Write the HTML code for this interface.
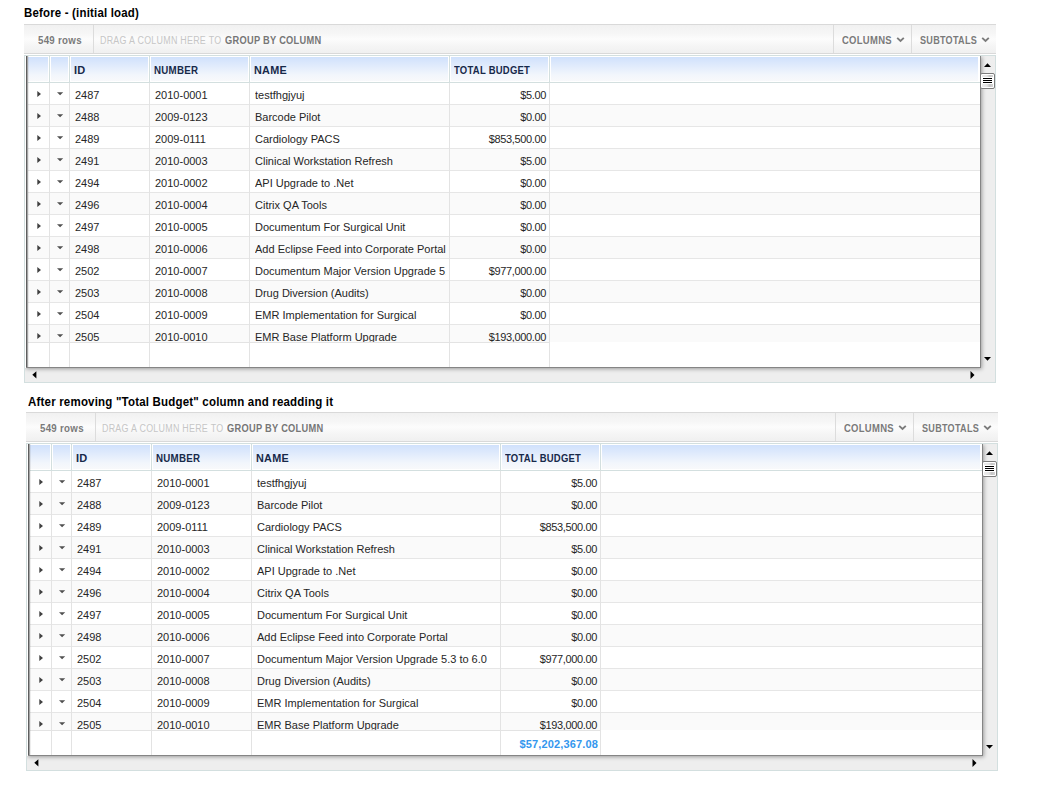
<!DOCTYPE html>
<html><head><meta charset="utf-8"><style>
*{margin:0;padding:0;box-sizing:border-box}
html,body{width:1041px;height:802px;background:#fff;overflow:hidden;position:relative;font-family:"Liberation Sans",sans-serif}
.a{position:absolute}
.title{position:absolute;font-size:12px;font-weight:bold;color:#000;white-space:nowrap;line-height:14px}
.tb{position:absolute;border-top:1px solid #d9d9d9;border-bottom:1px solid #d9d9d9;background:linear-gradient(#f1f1f1,#f6f6f6 30%,#fcfcfc 50%,#f5f5f5 75%,#f0f0f0)}
.tbs{position:absolute;top:0;bottom:0;width:1px;background:#dcdcdc}
.tbt{position:absolute;font-size:10px;white-space:nowrap;line-height:12px;color:#7a7a7a;font-weight:bold;transform-origin:0 0;letter-spacing:0.3px}
.grid{position:absolute;border:1px solid #d3dfdf;background:#eeeeee;overflow:hidden}
.hdr{position:absolute;background:linear-gradient(#d0e1fc,#e2ecfc 40%,#f2f6fc 75%,#f8f9fb);border:1px solid #fff}
.hl{position:absolute;width:1px;background:#d3dfdf}
.ht{position:absolute;font-size:11px;font-weight:bold;color:#17294a;white-space:nowrap;line-height:13px;transform-origin:0 0}
.row{position:absolute;height:22px;border-bottom:1px solid #e6e6e6}
.alt{background:#fafafa}
.cl{position:absolute;width:1px;background:#e3e3e3}
.ct{position:absolute;font-size:11px;color:#262626;white-space:nowrap;line-height:13px}
.r{text-align:right}
.vp{position:absolute;overflow:hidden}
.tri{position:absolute;width:0;height:0}
</style></head>
<body>
<div class="title" style="left:24px;top:6px;letter-spacing:0.2px;transform:scaleX(0.953);transform-origin:0 0">Before - (initial load)</div>
<div class="tb" style="left:24px;top:24px;width:972px;height:30px">
<div class="tbs" style="left:69px"></div>
<div class="tbt" style="left:13.7px;top:10px;transform:scaleX(0.97)">549 rows</div>
<div class="tbt" style="left:76px;top:10px;font-weight:normal;color:#c6c6c6;transform:scaleX(0.889)">DRAG A COLUMN HERE TO</div>
<div class="tbt" style="left:200.6px;top:10px;color:#767676;transform:scaleX(0.926)">GROUP BY COLUMN</div>
<div class="tbs" style="left:809px"></div>
<div class="tbt" style="left:817.5px;top:10px;transform:scaleX(0.947)">COLUMNS</div>
<svg class="a" style="left:872px;top:12px" width="9" height="6" viewBox="0 0 9 6"><path d="M1.2 0.9 L4.5 4 L7.8 0.9" fill="none" stroke="#7c7c7c" stroke-width="1.9"/></svg>
<div class="tbs" style="left:887px"></div>
<div class="tbt" style="left:895.5px;top:10px;transform:scaleX(0.907)">SUBTOTALS</div>
<svg class="a" style="left:957px;top:12px" width="9" height="6" viewBox="0 0 9 6"><path d="M1.2 0.9 L4.5 4 L7.8 0.9" fill="none" stroke="#7c7c7c" stroke-width="1.9"/></svg>
</div>
<div class="grid" style="left:24px;top:55px;width:972px;height:328px">
<div class="a" style="left:0;top:0;width:956px;height:312px;background:#fff;box-shadow:1px 1px 4px rgba(0,0,0,0.35)"></div>
<div class="hdr" style="left:3px;top:0px;width:951px;height:26px;border-left:0"></div>
<div class="hl" style="left:24px;top:0;height:26px"></div>
<div class="a" style="left:23px;top:0;height:26px;width:1px;background:#fff"></div>
<div class="a" style="left:25px;top:0;height:26px;width:1px;background:#fff"></div>
<div class="hl" style="left:44px;top:0;height:26px"></div>
<div class="a" style="left:43px;top:0;height:26px;width:1px;background:#fff"></div>
<div class="a" style="left:45px;top:0;height:26px;width:1px;background:#fff"></div>
<div class="hl" style="left:124px;top:0;height:26px"></div>
<div class="a" style="left:123px;top:0;height:26px;width:1px;background:#fff"></div>
<div class="a" style="left:125px;top:0;height:26px;width:1px;background:#fff"></div>
<div class="hl" style="left:224px;top:0;height:26px"></div>
<div class="a" style="left:223px;top:0;height:26px;width:1px;background:#fff"></div>
<div class="a" style="left:225px;top:0;height:26px;width:1px;background:#fff"></div>
<div class="hl" style="left:424px;top:0;height:26px"></div>
<div class="a" style="left:423px;top:0;height:26px;width:1px;background:#fff"></div>
<div class="a" style="left:425px;top:0;height:26px;width:1px;background:#fff"></div>
<div class="hl" style="left:524px;top:0;height:26px"></div>
<div class="a" style="left:523px;top:0;height:26px;width:1px;background:#fff"></div>
<div class="a" style="left:525px;top:0;height:26px;width:1px;background:#fff"></div>
<div class="a" style="left:3px;top:26px;width:952px;height:1px;background:#d3dfdf"></div>
<div class="ht" style="left:49px;top:8px;letter-spacing:0.3px;transform:scaleX(1.0)">ID</div>
<div class="ht" style="left:129px;top:8px;letter-spacing:0.3px;transform:scaleX(0.885)">NUMBER</div>
<div class="ht" style="left:229px;top:8px;letter-spacing:0.3px;transform:scaleX(0.984)">NAME</div>
<div class="ht" style="left:429px;top:8px;letter-spacing:0.3px;transform:scaleX(0.86)">TOTAL BUDGET</div>
<div class="vp" style="left:3px;top:27px;width:952px;height:259px">
<div class="row" style="left:0;top:0px;width:952px"></div>
<svg class="a" style="left:9px;top:7px" width="5" height="8" viewBox="0 0 5 8"><path d="M0.3 0.9 L4 3.9 L0.3 6.9Z" fill="#404040"/></svg>
<svg class="a" style="left:29px;top:9px" width="7" height="4" viewBox="0 0 7 4"><path d="M0 0.3 L6.2 0.3 L3.1 3.3Z" fill="#505050"/></svg>
<div class="ct" style="left:47px;top:6px">2487</div>
<div class="ct" style="left:127px;top:6px">2010-0001</div>
<div class="ct" style="left:227px;top:6px;width:191px;overflow:hidden">testfhgjyuj</div>
<div class="ct r" style="left:422px;top:6px;width:96px;letter-spacing:-0.35px">$5.00</div>
<div class="row alt" style="left:0;top:22px;width:952px"></div>
<svg class="a" style="left:9px;top:29px" width="5" height="8" viewBox="0 0 5 8"><path d="M0.3 0.9 L4 3.9 L0.3 6.9Z" fill="#404040"/></svg>
<svg class="a" style="left:29px;top:31px" width="7" height="4" viewBox="0 0 7 4"><path d="M0 0.3 L6.2 0.3 L3.1 3.3Z" fill="#505050"/></svg>
<div class="ct" style="left:47px;top:28px">2488</div>
<div class="ct" style="left:127px;top:28px">2009-0123</div>
<div class="ct" style="left:227px;top:28px;width:191px;overflow:hidden">Barcode Pilot</div>
<div class="ct r" style="left:422px;top:28px;width:96px;letter-spacing:-0.35px">$0.00</div>
<div class="row" style="left:0;top:44px;width:952px"></div>
<svg class="a" style="left:9px;top:51px" width="5" height="8" viewBox="0 0 5 8"><path d="M0.3 0.9 L4 3.9 L0.3 6.9Z" fill="#404040"/></svg>
<svg class="a" style="left:29px;top:53px" width="7" height="4" viewBox="0 0 7 4"><path d="M0 0.3 L6.2 0.3 L3.1 3.3Z" fill="#505050"/></svg>
<div class="ct" style="left:47px;top:50px">2489</div>
<div class="ct" style="left:127px;top:50px">2009-0111</div>
<div class="ct" style="left:227px;top:50px;width:191px;overflow:hidden">Cardiology PACS</div>
<div class="ct r" style="left:422px;top:50px;width:96px;letter-spacing:-0.35px">$853,500.00</div>
<div class="row alt" style="left:0;top:66px;width:952px"></div>
<svg class="a" style="left:9px;top:73px" width="5" height="8" viewBox="0 0 5 8"><path d="M0.3 0.9 L4 3.9 L0.3 6.9Z" fill="#404040"/></svg>
<svg class="a" style="left:29px;top:75px" width="7" height="4" viewBox="0 0 7 4"><path d="M0 0.3 L6.2 0.3 L3.1 3.3Z" fill="#505050"/></svg>
<div class="ct" style="left:47px;top:72px">2491</div>
<div class="ct" style="left:127px;top:72px">2010-0003</div>
<div class="ct" style="left:227px;top:72px;width:191px;overflow:hidden">Clinical Workstation Refresh</div>
<div class="ct r" style="left:422px;top:72px;width:96px;letter-spacing:-0.35px">$5.00</div>
<div class="row" style="left:0;top:88px;width:952px"></div>
<svg class="a" style="left:9px;top:95px" width="5" height="8" viewBox="0 0 5 8"><path d="M0.3 0.9 L4 3.9 L0.3 6.9Z" fill="#404040"/></svg>
<svg class="a" style="left:29px;top:97px" width="7" height="4" viewBox="0 0 7 4"><path d="M0 0.3 L6.2 0.3 L3.1 3.3Z" fill="#505050"/></svg>
<div class="ct" style="left:47px;top:94px">2494</div>
<div class="ct" style="left:127px;top:94px">2010-0002</div>
<div class="ct" style="left:227px;top:94px;width:191px;overflow:hidden">API Upgrade to .Net</div>
<div class="ct r" style="left:422px;top:94px;width:96px;letter-spacing:-0.35px">$0.00</div>
<div class="row alt" style="left:0;top:110px;width:952px"></div>
<svg class="a" style="left:9px;top:117px" width="5" height="8" viewBox="0 0 5 8"><path d="M0.3 0.9 L4 3.9 L0.3 6.9Z" fill="#404040"/></svg>
<svg class="a" style="left:29px;top:119px" width="7" height="4" viewBox="0 0 7 4"><path d="M0 0.3 L6.2 0.3 L3.1 3.3Z" fill="#505050"/></svg>
<div class="ct" style="left:47px;top:116px">2496</div>
<div class="ct" style="left:127px;top:116px">2010-0004</div>
<div class="ct" style="left:227px;top:116px;width:191px;overflow:hidden">Citrix QA Tools</div>
<div class="ct r" style="left:422px;top:116px;width:96px;letter-spacing:-0.35px">$0.00</div>
<div class="row" style="left:0;top:132px;width:952px"></div>
<svg class="a" style="left:9px;top:139px" width="5" height="8" viewBox="0 0 5 8"><path d="M0.3 0.9 L4 3.9 L0.3 6.9Z" fill="#404040"/></svg>
<svg class="a" style="left:29px;top:141px" width="7" height="4" viewBox="0 0 7 4"><path d="M0 0.3 L6.2 0.3 L3.1 3.3Z" fill="#505050"/></svg>
<div class="ct" style="left:47px;top:138px">2497</div>
<div class="ct" style="left:127px;top:138px">2010-0005</div>
<div class="ct" style="left:227px;top:138px;width:191px;overflow:hidden">Documentum For Surgical Unit</div>
<div class="ct r" style="left:422px;top:138px;width:96px;letter-spacing:-0.35px">$0.00</div>
<div class="row alt" style="left:0;top:154px;width:952px"></div>
<svg class="a" style="left:9px;top:161px" width="5" height="8" viewBox="0 0 5 8"><path d="M0.3 0.9 L4 3.9 L0.3 6.9Z" fill="#404040"/></svg>
<svg class="a" style="left:29px;top:163px" width="7" height="4" viewBox="0 0 7 4"><path d="M0 0.3 L6.2 0.3 L3.1 3.3Z" fill="#505050"/></svg>
<div class="ct" style="left:47px;top:160px">2498</div>
<div class="ct" style="left:127px;top:160px">2010-0006</div>
<div class="ct" style="left:227px;top:160px;width:191px;overflow:hidden">Add Eclipse Feed into Corporate Portal</div>
<div class="ct r" style="left:422px;top:160px;width:96px;letter-spacing:-0.35px">$0.00</div>
<div class="row" style="left:0;top:176px;width:952px"></div>
<svg class="a" style="left:9px;top:183px" width="5" height="8" viewBox="0 0 5 8"><path d="M0.3 0.9 L4 3.9 L0.3 6.9Z" fill="#404040"/></svg>
<svg class="a" style="left:29px;top:185px" width="7" height="4" viewBox="0 0 7 4"><path d="M0 0.3 L6.2 0.3 L3.1 3.3Z" fill="#505050"/></svg>
<div class="ct" style="left:47px;top:182px">2502</div>
<div class="ct" style="left:127px;top:182px">2010-0007</div>
<div class="ct" style="left:227px;top:182px;width:191px;overflow:hidden">Documentum Major Version Upgrade 5.3 to 6.0</div>
<div class="ct r" style="left:422px;top:182px;width:96px;letter-spacing:-0.35px">$977,000.00</div>
<div class="row alt" style="left:0;top:198px;width:952px"></div>
<svg class="a" style="left:9px;top:205px" width="5" height="8" viewBox="0 0 5 8"><path d="M0.3 0.9 L4 3.9 L0.3 6.9Z" fill="#404040"/></svg>
<svg class="a" style="left:29px;top:207px" width="7" height="4" viewBox="0 0 7 4"><path d="M0 0.3 L6.2 0.3 L3.1 3.3Z" fill="#505050"/></svg>
<div class="ct" style="left:47px;top:204px">2503</div>
<div class="ct" style="left:127px;top:204px">2010-0008</div>
<div class="ct" style="left:227px;top:204px;width:191px;overflow:hidden">Drug Diversion (Audits)</div>
<div class="ct r" style="left:422px;top:204px;width:96px;letter-spacing:-0.35px">$0.00</div>
<div class="row" style="left:0;top:220px;width:952px"></div>
<svg class="a" style="left:9px;top:227px" width="5" height="8" viewBox="0 0 5 8"><path d="M0.3 0.9 L4 3.9 L0.3 6.9Z" fill="#404040"/></svg>
<svg class="a" style="left:29px;top:229px" width="7" height="4" viewBox="0 0 7 4"><path d="M0 0.3 L6.2 0.3 L3.1 3.3Z" fill="#505050"/></svg>
<div class="ct" style="left:47px;top:226px">2504</div>
<div class="ct" style="left:127px;top:226px">2010-0009</div>
<div class="ct" style="left:227px;top:226px;width:191px;overflow:hidden">EMR Implementation for Surgical</div>
<div class="ct r" style="left:422px;top:226px;width:96px;letter-spacing:-0.35px">$0.00</div>
<div class="row alt" style="left:0;top:242px;width:952px"></div>
<svg class="a" style="left:9px;top:249px" width="5" height="8" viewBox="0 0 5 8"><path d="M0.3 0.9 L4 3.9 L0.3 6.9Z" fill="#404040"/></svg>
<svg class="a" style="left:29px;top:251px" width="7" height="4" viewBox="0 0 7 4"><path d="M0 0.3 L6.2 0.3 L3.1 3.3Z" fill="#505050"/></svg>
<div class="ct" style="left:47px;top:248px">2505</div>
<div class="ct" style="left:127px;top:248px">2010-0010</div>
<div class="ct" style="left:227px;top:248px;width:191px;overflow:hidden">EMR Base Platform Upgrade</div>
<div class="ct r" style="left:422px;top:248px;width:96px;letter-spacing:-0.35px">$193,000.00</div>
<div class="cl" style="left:21px;top:0;height:259px"></div>
<div class="cl" style="left:41px;top:0;height:259px"></div>
<div class="cl" style="left:121px;top:0;height:259px"></div>
<div class="cl" style="left:221px;top:0;height:259px"></div>
<div class="cl" style="left:421px;top:0;height:259px"></div>
<div class="cl" style="left:521px;top:0;height:259px"></div>
</div>
<div class="a" style="left:3px;top:286px;width:521px;height:1px;background:#e3e3e3"></div>
<div class="cl" style="left:24px;top:286px;height:25px"></div>
<div class="cl" style="left:44px;top:286px;height:25px"></div>
<div class="cl" style="left:124px;top:286px;height:25px"></div>
<div class="cl" style="left:224px;top:286px;height:25px"></div>
<div class="cl" style="left:424px;top:286px;height:25px"></div>
<div class="cl" style="left:524px;top:286px;height:25px"></div>
<div class="a" style="left:1px;top:0;width:1px;height:311px;background:#5e5e5e"></div>
<div class="a" style="left:2px;top:0;width:1px;height:311px;background:#a5a5a5"></div>
<div class="a" style="left:3px;top:0;width:1px;height:311px;background:rgba(0,0,0,0.07)"></div>
<div class="a" style="left:955px;top:0;width:1px;height:312px;background:#858585"></div>
<div class="a" style="left:1px;top:311px;width:955px;height:1px;background:#858585"></div>
<svg class="a" style="left:959px;top:7px" width="7" height="4" viewBox="0 0 7 4"><path d="M0 4 L3.5 0.2 L7 4Z" fill="#000"/></svg>
<div class="a" style="left:955px;top:17px;width:15px;height:16px;border:1px solid #7c7c7c;border-radius:2px;background:#fff"></div>
<div class="a" style="left:957px;top:19px;width:11px;height:12px;background:linear-gradient(90deg,#ececec,#e4e4e4 45%,#c4c4c4 70%,#d4d4d4)"></div>
<div class="a" style="left:957px;top:21px;width:11px;height:7px;background:#fff"></div>
<div class="a" style="left:958px;top:22px;width:9px;height:1px;background:#000"></div>
<div class="a" style="left:958px;top:24px;width:9px;height:1px;background:#000"></div>
<div class="a" style="left:958px;top:26px;width:9px;height:1px;background:#000"></div>
<svg class="a" style="left:959px;top:301px" width="7" height="4" viewBox="0 0 7 4"><path d="M0 0 L3.5 3.8 L7 0Z" fill="#000"/></svg>
<svg class="a" style="left:7px;top:315px" width="5" height="8" viewBox="0 0 5 8"><path d="M4.4 0.2 L0.3 3.8 L4.4 7.4Z" fill="#000"/></svg>
<svg class="a" style="left:945px;top:315px" width="5" height="8" viewBox="0 0 5 8"><path d="M0.5 0 L4.5 4 L0.5 8Z" fill="#000"/></svg>
</div>
<div class="title" style="left:28px;top:395px;letter-spacing:0.2px;transform:scaleX(0.959);transform-origin:0 0">After removing "Total Budget" column and readding it</div>
<div class="tb" style="left:26px;top:412px;width:972px;height:30px">
<div class="tbs" style="left:69px"></div>
<div class="tbt" style="left:13.7px;top:10px;transform:scaleX(0.97)">549 rows</div>
<div class="tbt" style="left:76px;top:10px;font-weight:normal;color:#c6c6c6;transform:scaleX(0.889)">DRAG A COLUMN HERE TO</div>
<div class="tbt" style="left:200.6px;top:10px;color:#767676;transform:scaleX(0.926)">GROUP BY COLUMN</div>
<div class="tbs" style="left:809px"></div>
<div class="tbt" style="left:817.5px;top:10px;transform:scaleX(0.947)">COLUMNS</div>
<svg class="a" style="left:872px;top:12px" width="9" height="6" viewBox="0 0 9 6"><path d="M1.2 0.9 L4.5 4 L7.8 0.9" fill="none" stroke="#7c7c7c" stroke-width="1.9"/></svg>
<div class="tbs" style="left:887px"></div>
<div class="tbt" style="left:895.5px;top:10px;transform:scaleX(0.907)">SUBTOTALS</div>
<svg class="a" style="left:957px;top:12px" width="9" height="6" viewBox="0 0 9 6"><path d="M1.2 0.9 L4.5 4 L7.8 0.9" fill="none" stroke="#7c7c7c" stroke-width="1.9"/></svg>
</div>
<div class="grid" style="left:26px;top:443px;width:972px;height:328px">
<div class="a" style="left:0;top:0;width:956px;height:312px;background:#fff;box-shadow:1px 1px 4px rgba(0,0,0,0.35)"></div>
<div class="hdr" style="left:1px;top:0px;width:953px;height:26px;border-left:0"></div>
<div class="hl" style="left:24px;top:0;height:26px"></div>
<div class="a" style="left:23px;top:0;height:26px;width:1px;background:#fff"></div>
<div class="a" style="left:25px;top:0;height:26px;width:1px;background:#fff"></div>
<div class="hl" style="left:44px;top:0;height:26px"></div>
<div class="a" style="left:43px;top:0;height:26px;width:1px;background:#fff"></div>
<div class="a" style="left:45px;top:0;height:26px;width:1px;background:#fff"></div>
<div class="hl" style="left:124px;top:0;height:26px"></div>
<div class="a" style="left:123px;top:0;height:26px;width:1px;background:#fff"></div>
<div class="a" style="left:125px;top:0;height:26px;width:1px;background:#fff"></div>
<div class="hl" style="left:224px;top:0;height:26px"></div>
<div class="a" style="left:223px;top:0;height:26px;width:1px;background:#fff"></div>
<div class="a" style="left:225px;top:0;height:26px;width:1px;background:#fff"></div>
<div class="hl" style="left:473px;top:0;height:26px"></div>
<div class="a" style="left:472px;top:0;height:26px;width:1px;background:#fff"></div>
<div class="a" style="left:474px;top:0;height:26px;width:1px;background:#fff"></div>
<div class="hl" style="left:573px;top:0;height:26px"></div>
<div class="a" style="left:572px;top:0;height:26px;width:1px;background:#fff"></div>
<div class="a" style="left:574px;top:0;height:26px;width:1px;background:#fff"></div>
<div class="a" style="left:1px;top:26px;width:954px;height:1px;background:#d3dfdf"></div>
<div class="ht" style="left:49px;top:8px;letter-spacing:0.3px;transform:scaleX(1.0)">ID</div>
<div class="ht" style="left:129px;top:8px;letter-spacing:0.3px;transform:scaleX(0.885)">NUMBER</div>
<div class="ht" style="left:229px;top:8px;letter-spacing:0.3px;transform:scaleX(0.984)">NAME</div>
<div class="ht" style="left:478px;top:8px;letter-spacing:0.3px;transform:scaleX(0.86)">TOTAL BUDGET</div>
<div class="vp" style="left:1px;top:27px;width:954px;height:259px">
<div class="row" style="left:0;top:0px;width:954px"></div>
<svg class="a" style="left:11px;top:7px" width="5" height="8" viewBox="0 0 5 8"><path d="M0.3 0.9 L4 3.9 L0.3 6.9Z" fill="#404040"/></svg>
<svg class="a" style="left:31px;top:9px" width="7" height="4" viewBox="0 0 7 4"><path d="M0 0.3 L6.2 0.3 L3.1 3.3Z" fill="#505050"/></svg>
<div class="ct" style="left:49px;top:6px">2487</div>
<div class="ct" style="left:129px;top:6px">2010-0001</div>
<div class="ct" style="left:229px;top:6px;width:240px;overflow:hidden">testfhgjyuj</div>
<div class="ct r" style="left:473px;top:6px;width:96px;letter-spacing:-0.35px">$5.00</div>
<div class="row alt" style="left:0;top:22px;width:954px"></div>
<svg class="a" style="left:11px;top:29px" width="5" height="8" viewBox="0 0 5 8"><path d="M0.3 0.9 L4 3.9 L0.3 6.9Z" fill="#404040"/></svg>
<svg class="a" style="left:31px;top:31px" width="7" height="4" viewBox="0 0 7 4"><path d="M0 0.3 L6.2 0.3 L3.1 3.3Z" fill="#505050"/></svg>
<div class="ct" style="left:49px;top:28px">2488</div>
<div class="ct" style="left:129px;top:28px">2009-0123</div>
<div class="ct" style="left:229px;top:28px;width:240px;overflow:hidden">Barcode Pilot</div>
<div class="ct r" style="left:473px;top:28px;width:96px;letter-spacing:-0.35px">$0.00</div>
<div class="row" style="left:0;top:44px;width:954px"></div>
<svg class="a" style="left:11px;top:51px" width="5" height="8" viewBox="0 0 5 8"><path d="M0.3 0.9 L4 3.9 L0.3 6.9Z" fill="#404040"/></svg>
<svg class="a" style="left:31px;top:53px" width="7" height="4" viewBox="0 0 7 4"><path d="M0 0.3 L6.2 0.3 L3.1 3.3Z" fill="#505050"/></svg>
<div class="ct" style="left:49px;top:50px">2489</div>
<div class="ct" style="left:129px;top:50px">2009-0111</div>
<div class="ct" style="left:229px;top:50px;width:240px;overflow:hidden">Cardiology PACS</div>
<div class="ct r" style="left:473px;top:50px;width:96px;letter-spacing:-0.35px">$853,500.00</div>
<div class="row alt" style="left:0;top:66px;width:954px"></div>
<svg class="a" style="left:11px;top:73px" width="5" height="8" viewBox="0 0 5 8"><path d="M0.3 0.9 L4 3.9 L0.3 6.9Z" fill="#404040"/></svg>
<svg class="a" style="left:31px;top:75px" width="7" height="4" viewBox="0 0 7 4"><path d="M0 0.3 L6.2 0.3 L3.1 3.3Z" fill="#505050"/></svg>
<div class="ct" style="left:49px;top:72px">2491</div>
<div class="ct" style="left:129px;top:72px">2010-0003</div>
<div class="ct" style="left:229px;top:72px;width:240px;overflow:hidden">Clinical Workstation Refresh</div>
<div class="ct r" style="left:473px;top:72px;width:96px;letter-spacing:-0.35px">$5.00</div>
<div class="row" style="left:0;top:88px;width:954px"></div>
<svg class="a" style="left:11px;top:95px" width="5" height="8" viewBox="0 0 5 8"><path d="M0.3 0.9 L4 3.9 L0.3 6.9Z" fill="#404040"/></svg>
<svg class="a" style="left:31px;top:97px" width="7" height="4" viewBox="0 0 7 4"><path d="M0 0.3 L6.2 0.3 L3.1 3.3Z" fill="#505050"/></svg>
<div class="ct" style="left:49px;top:94px">2494</div>
<div class="ct" style="left:129px;top:94px">2010-0002</div>
<div class="ct" style="left:229px;top:94px;width:240px;overflow:hidden">API Upgrade to .Net</div>
<div class="ct r" style="left:473px;top:94px;width:96px;letter-spacing:-0.35px">$0.00</div>
<div class="row alt" style="left:0;top:110px;width:954px"></div>
<svg class="a" style="left:11px;top:117px" width="5" height="8" viewBox="0 0 5 8"><path d="M0.3 0.9 L4 3.9 L0.3 6.9Z" fill="#404040"/></svg>
<svg class="a" style="left:31px;top:119px" width="7" height="4" viewBox="0 0 7 4"><path d="M0 0.3 L6.2 0.3 L3.1 3.3Z" fill="#505050"/></svg>
<div class="ct" style="left:49px;top:116px">2496</div>
<div class="ct" style="left:129px;top:116px">2010-0004</div>
<div class="ct" style="left:229px;top:116px;width:240px;overflow:hidden">Citrix QA Tools</div>
<div class="ct r" style="left:473px;top:116px;width:96px;letter-spacing:-0.35px">$0.00</div>
<div class="row" style="left:0;top:132px;width:954px"></div>
<svg class="a" style="left:11px;top:139px" width="5" height="8" viewBox="0 0 5 8"><path d="M0.3 0.9 L4 3.9 L0.3 6.9Z" fill="#404040"/></svg>
<svg class="a" style="left:31px;top:141px" width="7" height="4" viewBox="0 0 7 4"><path d="M0 0.3 L6.2 0.3 L3.1 3.3Z" fill="#505050"/></svg>
<div class="ct" style="left:49px;top:138px">2497</div>
<div class="ct" style="left:129px;top:138px">2010-0005</div>
<div class="ct" style="left:229px;top:138px;width:240px;overflow:hidden">Documentum For Surgical Unit</div>
<div class="ct r" style="left:473px;top:138px;width:96px;letter-spacing:-0.35px">$0.00</div>
<div class="row alt" style="left:0;top:154px;width:954px"></div>
<svg class="a" style="left:11px;top:161px" width="5" height="8" viewBox="0 0 5 8"><path d="M0.3 0.9 L4 3.9 L0.3 6.9Z" fill="#404040"/></svg>
<svg class="a" style="left:31px;top:163px" width="7" height="4" viewBox="0 0 7 4"><path d="M0 0.3 L6.2 0.3 L3.1 3.3Z" fill="#505050"/></svg>
<div class="ct" style="left:49px;top:160px">2498</div>
<div class="ct" style="left:129px;top:160px">2010-0006</div>
<div class="ct" style="left:229px;top:160px;width:240px;overflow:hidden">Add Eclipse Feed into Corporate Portal</div>
<div class="ct r" style="left:473px;top:160px;width:96px;letter-spacing:-0.35px">$0.00</div>
<div class="row" style="left:0;top:176px;width:954px"></div>
<svg class="a" style="left:11px;top:183px" width="5" height="8" viewBox="0 0 5 8"><path d="M0.3 0.9 L4 3.9 L0.3 6.9Z" fill="#404040"/></svg>
<svg class="a" style="left:31px;top:185px" width="7" height="4" viewBox="0 0 7 4"><path d="M0 0.3 L6.2 0.3 L3.1 3.3Z" fill="#505050"/></svg>
<div class="ct" style="left:49px;top:182px">2502</div>
<div class="ct" style="left:129px;top:182px">2010-0007</div>
<div class="ct" style="left:229px;top:182px;width:240px;overflow:hidden">Documentum Major Version Upgrade 5.3 to 6.0</div>
<div class="ct r" style="left:473px;top:182px;width:96px;letter-spacing:-0.35px">$977,000.00</div>
<div class="row alt" style="left:0;top:198px;width:954px"></div>
<svg class="a" style="left:11px;top:205px" width="5" height="8" viewBox="0 0 5 8"><path d="M0.3 0.9 L4 3.9 L0.3 6.9Z" fill="#404040"/></svg>
<svg class="a" style="left:31px;top:207px" width="7" height="4" viewBox="0 0 7 4"><path d="M0 0.3 L6.2 0.3 L3.1 3.3Z" fill="#505050"/></svg>
<div class="ct" style="left:49px;top:204px">2503</div>
<div class="ct" style="left:129px;top:204px">2010-0008</div>
<div class="ct" style="left:229px;top:204px;width:240px;overflow:hidden">Drug Diversion (Audits)</div>
<div class="ct r" style="left:473px;top:204px;width:96px;letter-spacing:-0.35px">$0.00</div>
<div class="row" style="left:0;top:220px;width:954px"></div>
<svg class="a" style="left:11px;top:227px" width="5" height="8" viewBox="0 0 5 8"><path d="M0.3 0.9 L4 3.9 L0.3 6.9Z" fill="#404040"/></svg>
<svg class="a" style="left:31px;top:229px" width="7" height="4" viewBox="0 0 7 4"><path d="M0 0.3 L6.2 0.3 L3.1 3.3Z" fill="#505050"/></svg>
<div class="ct" style="left:49px;top:226px">2504</div>
<div class="ct" style="left:129px;top:226px">2010-0009</div>
<div class="ct" style="left:229px;top:226px;width:240px;overflow:hidden">EMR Implementation for Surgical</div>
<div class="ct r" style="left:473px;top:226px;width:96px;letter-spacing:-0.35px">$0.00</div>
<div class="row alt" style="left:0;top:242px;width:954px"></div>
<svg class="a" style="left:11px;top:249px" width="5" height="8" viewBox="0 0 5 8"><path d="M0.3 0.9 L4 3.9 L0.3 6.9Z" fill="#404040"/></svg>
<svg class="a" style="left:31px;top:251px" width="7" height="4" viewBox="0 0 7 4"><path d="M0 0.3 L6.2 0.3 L3.1 3.3Z" fill="#505050"/></svg>
<div class="ct" style="left:49px;top:248px">2505</div>
<div class="ct" style="left:129px;top:248px">2010-0010</div>
<div class="ct" style="left:229px;top:248px;width:240px;overflow:hidden">EMR Base Platform Upgrade</div>
<div class="ct r" style="left:473px;top:248px;width:96px;letter-spacing:-0.35px">$193,000.00</div>
<div class="cl" style="left:23px;top:0;height:259px"></div>
<div class="cl" style="left:43px;top:0;height:259px"></div>
<div class="cl" style="left:123px;top:0;height:259px"></div>
<div class="cl" style="left:223px;top:0;height:259px"></div>
<div class="cl" style="left:472px;top:0;height:259px"></div>
<div class="cl" style="left:572px;top:0;height:259px"></div>
</div>
<div class="a" style="left:1px;top:286px;width:572px;height:1px;background:#e3e3e3"></div>
<div class="cl" style="left:24px;top:286px;height:25px"></div>
<div class="cl" style="left:44px;top:286px;height:25px"></div>
<div class="cl" style="left:124px;top:286px;height:25px"></div>
<div class="cl" style="left:224px;top:286px;height:25px"></div>
<div class="cl" style="left:473px;top:286px;height:25px"></div>
<div class="cl" style="left:573px;top:286px;height:25px"></div>
<div class="ct r" style="left:474px;top:294px;width:97px;font-weight:bold;color:#3497ee;letter-spacing:0.15px">$57,202,367.08</div>
<div class="a" style="left:1px;top:0;width:1px;height:311px;background:#5e5e5e"></div>
<div class="a" style="left:2px;top:0;width:1px;height:311px;background:#a5a5a5"></div>
<div class="a" style="left:3px;top:0;width:1px;height:311px;background:rgba(0,0,0,0.07)"></div>
<div class="a" style="left:955px;top:0;width:1px;height:312px;background:#858585"></div>
<div class="a" style="left:1px;top:311px;width:955px;height:1px;background:#858585"></div>
<svg class="a" style="left:959px;top:7px" width="7" height="4" viewBox="0 0 7 4"><path d="M0 4 L3.5 0.2 L7 4Z" fill="#000"/></svg>
<div class="a" style="left:955px;top:17px;width:15px;height:16px;border:1px solid #7c7c7c;border-radius:2px;background:#fff"></div>
<div class="a" style="left:957px;top:19px;width:11px;height:12px;background:linear-gradient(90deg,#ececec,#e4e4e4 45%,#c4c4c4 70%,#d4d4d4)"></div>
<div class="a" style="left:957px;top:21px;width:11px;height:7px;background:#fff"></div>
<div class="a" style="left:958px;top:22px;width:9px;height:1px;background:#000"></div>
<div class="a" style="left:958px;top:24px;width:9px;height:1px;background:#000"></div>
<div class="a" style="left:958px;top:26px;width:9px;height:1px;background:#000"></div>
<svg class="a" style="left:959px;top:301px" width="7" height="4" viewBox="0 0 7 4"><path d="M0 0 L3.5 3.8 L7 0Z" fill="#000"/></svg>
<svg class="a" style="left:7px;top:315px" width="5" height="8" viewBox="0 0 5 8"><path d="M4.4 0.2 L0.3 3.8 L4.4 7.4Z" fill="#000"/></svg>
<svg class="a" style="left:945px;top:315px" width="5" height="8" viewBox="0 0 5 8"><path d="M0.5 0 L4.5 4 L0.5 8Z" fill="#000"/></svg>
</div>
</body></html>
